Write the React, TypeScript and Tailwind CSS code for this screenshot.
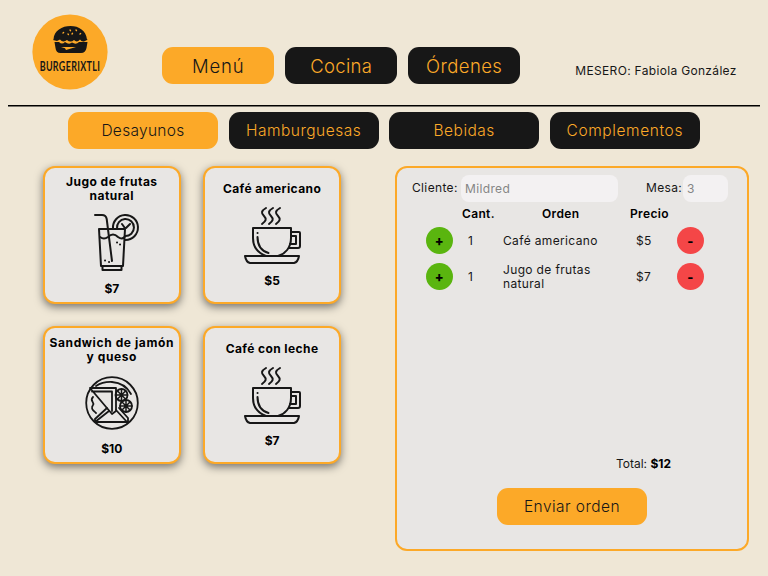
import React from "react";

const stroke = {
  fill: "none",
  stroke: "#171717",
  strokeWidth: 2,
  strokeLinecap: "round" as const,
  strokeLinejoin: "round" as const,
};

function Logo() {
  return (
    <svg className="block size-[76px] overflow-visible" viewBox="0 0 76 76">
      <circle cx="38" cy="38" r="37.6" fill="#fca928" />
      <path d="M21.500 25.500C22 16.500 30 12 38.500 12S54 16.500 55 25.500L56 25.500L53 27Q50 28.500 48 25.500Q45 29 42 26Q38.500 29 35 26Q31 29 28 25.500L25 27L21 26Z" fill="#171717" />
      <path d="M22.500 28L27 28Q30 31 33 28Q37 31 40 28.500Q44 31 47 28L55.500 28L54.500 34Q53.500 39 49 39H28.500Q24 39 23.500 34Z" fill="#171717" />
      <path d="M29 33H44L34 36L33 34.200Z" fill="#fca928" />
      <g stroke="#fca928" strokeWidth="1.4" strokeLinecap="round">
        <path d="M31 19l.6-.5M38 16l.5.7M40 20l.5-.7M44 16l.5.6M48 20l.6-.5M36 20l.4.4" />
      </g>
      <text x="12" y="57.500" textLength="94" lengthAdjust="spacing" transform="scale(0.64 1)" fill="#171717" fontFamily="Lato, sans-serif" fontSize="14" fontWeight="700">BURGERIXTLI</text>
    </svg>
  );
}

function Juice() {
  return (
    <svg className="block size-[58px]" viewBox="0 0 58 58" {...stroke}>
      <path d="M11 2h7q4 0 4.700 4L28 48" />
      <path d="M15 16h26l-2 37H17Z" />
      <path d="M18.500 53v4h19v-4" />
      <path d="M16 24q4 3 8 0 5-5 10 0 4 3 6.500 0" />
      <path d="M29 15.500A12.500 12.500 0 1 1 41.500 27" />
      <path d="M33 15.500A8.500 8.500 0 1 1 41 23" />
      <path d="m38 11 2.500 3.500M46 11l-4 4M33 29.500h.1M36 31.500h.1M21 47.500h.1M25 49h.1" />
    </svg>
  );
}

function Coffee() {
  return (
    <svg className="block h-[58px] w-[58px]" viewBox="0 0 58 58" {...stroke}>
      <path d="M23 2c-5 3-5 5-2 8s2 5-2 8M30 2c-5 3-5 5-2 8s2 5-2 8M37 2c-5 3-5 5-2 8s2 5-2 8" />
      <path d="M10 22h38v10c0 10-6 16-13 18H23C15 47 10 41 10 32Z" />
      <path d="M48 26h8q1 0 1 1v13q0 2-2 2h-9M48 30h5v8h-6" />
      <path d="M2 50h54q-1 6-5 7H7q-4-1-5-7Z" />
      <path d="M14.500 27h.1M14.500 31c0 9 4 14 11 16" />
    </svg>
  );
}

function Sandwich() {
  return (
    <svg className="block size-[54px]" viewBox="0 0 54 54" {...stroke} strokeWidth="1.8">
      <circle cx="27" cy="27" r="25.800" />
      <path d="M11 10Q18 5.500 27 6 40 7 46 18" />
      <path d="M5 12h26v23l-4 3ZM7 15.500h20V35" />
      <path d="M8 21c-4 4 2 5 0 8-3 4 1 6 3 8M22 32 10 43v3l14-11M10 46h32L31 34M34 32l9 10v4H10" />
      <circle cx="36.500" cy="19" r="6" />
      <circle cx="41" cy="30" r="6" />
      <path strokeWidth="1.500" d="M32.500 15l8 8M40.500 15l-8 8M36.500 13v12M31 19h11.500M37 26l8 8M45 26l-8 8M41 24v12M35 30h12" />
    </svg>
  );
}

const products = [
  { name: <>Jugo de frutas<br />natural</>, price: "$7", icon: <Juice />, top: "pt-[7px]", gap: "mt-[10px]", bottom: "mt-[11px]", icx: "ml-[3px]", ls: "tracking-[0.45px]" },
  { name: "Café americano", price: "$5", icon: <Coffee />, top: "pt-[14px]", gap: "mt-[10px]", bottom: "mt-[10px]", icx: "", ls: "tracking-[0.4px]" },
  { name: <>Sandwich de jamón<br />y queso</>, price: "$10", icon: <Sandwich />, top: "pt-[8px]", gap: "mt-[12px]", bottom: "mt-[12px]", icx: "", ls: "tracking-[0.6px]" },
  { name: "Café con leche", price: "$7", icon: <Coffee />, top: "pt-[14px]", gap: "mt-[10px]", bottom: "mt-[10px]", icx: "", ls: "tracking-[0.4px]" },
];

const orders = [
  { name: <>Café americano</>, price: "$5" },
  { name: <>Jugo de frutas<br />natural</>, price: "$7" },
];

const nav = [
  { label: "Menú", active: true, ls: "tracking-[0.8px]" },
  { label: "Cocina", active: false, ls: "tracking-[0.3px]" },
  { label: "Órdenes", active: false, ls: "tracking-[0.4px]" },
];

const categories = [
  { label: "Desayunos", active: true, ls: "tracking-[0.3px]" },
  { label: "Hamburguesas", active: false, ls: "tracking-[0.5px]" },
  { label: "Bebidas", active: false, ls: "tracking-[0.5px]" },
  { label: "Complementos", active: false, ls: "tracking-[0.6px]" },
];

export default function App() {
  return (
    <div className="h-[576px] w-[768px] overflow-hidden bg-[#efe7d6] font-[Inter,sans-serif] text-[12px] leading-[14px] text-[#171717]">
      <header className="mx-2 flex h-[105px]">
        <div className="ml-6 mt-[14px] w-[130px]"><Logo /></div>
        <nav className="mt-[47px] flex gap-[10.6px]">
          {nav.map((n) => (
            <button key={n.label} className={`h-[37.300px] w-[112.400px] rounded-[11px] pt-px text-[18.500px] font-light ${n.ls} ${n.active ? "bg-[#fca928]" : "bg-[#171717] text-[#fca928]"}`}>{n.label}</button>
          ))}
        </nav>
        <p className="ml-[55px] mt-[64px] tracking-[0.32px] whitespace-nowrap">MESERO: Fabiola González</p>
      </header>
      <div className="mx-2 h-[2px] border-b border-[#77736b] bg-black" />
      <nav className="ml-[68px] mt-[5px] flex gap-[10.600px]">
        {categories.map((c) => (
          <button key={c.label} className={`h-[37.300px] w-[150px] rounded-[11px] pt-px text-[15.500px] font-light ${c.ls} ${c.active ? "bg-[#fca928]" : "bg-[#171717] text-[#fca928]"}`}>{c.label}</button>
        ))}
      </nav>
      <main className="mt-[16.700px] flex">
        <section className="ml-[42.500px] grid h-[299px] w-[299px] shrink-0 grid-cols-[138.600px_138.600px] grid-rows-[138px_138px] gap-x-[21.700px] gap-y-[22.300px]">
          {products.map((p, i) => (
            <article key={i} className={`flex flex-col items-center rounded-[12px] border-2 border-[#fca928] bg-[#e8e6e4] text-center font-bold text-black shadow-[0_3px_8px_rgba(0,0,0,0.5)] ${p.top}`}>
              <h2 className={`whitespace-nowrap ${p.ls}`}>{p.name}</h2>
              <div className={`${p.gap} ${p.icx}`}>{p.icon}</div>
              <p className={p.bottom}>{p.price}</p>
            </article>
          ))}
        </section>
        <section className="ml-[53.500px] h-[385px] w-[354px] shrink-0 rounded-[12px] border-2 border-[#fca928] bg-[#e8e6e4] tracking-[0.35px]">
          <div className="mt-[7px] flex h-[27px] items-center">
            <label className="ml-[15px] w-[49px] whitespace-nowrap">Cliente:</label>
            <div className="h-[27px] w-[157px] rounded-[8px] bg-[#f3f1f2] pl-1 leading-[27px] text-[#858585]">Mildred</div>
            <label className="ml-[28px] w-[37px] whitespace-nowrap">Mesa:</label>
            <div className="h-[27px] w-[45px] rounded-[8px] bg-[#f3f1f2] pl-1 leading-[27px] text-[#858585]">3</div>
          </div>
          <div className="mt-[5px] flex font-semibold text-black">
            <span className="ml-[65px] w-[80px]">Cant.</span>
            <span className="w-[88px]">Orden</span>
            <span>Precio</span>
          </div>
          <div className="mt-[2px]">
            {orders.map((o, i) => (
              <div key={i} className="flex h-9 items-center">
                <button className="ml-[29px] size-[27px] rounded-full bg-[#5ab50f] text-[13px] font-extrabold text-black">+</button>
                <span className="ml-[15px] w-[35px]">1</span>
                <span className="w-[133px]">{o.name}</span>
                <span className="w-[41px]">{o.price}</span>
                <button className="size-[27px] rounded-full bg-[#f44647] text-[13px] font-extrabold text-black">-</button>
              </div>
            ))}
          </div>
          <p className="mr-[76px] mt-[162px] text-right tracking-normal">Total: <b className="text-black">$12</b></p>
          <button className="mt-[17px] ml-[100px] h-[37.300px] w-[150px] rounded-[11px] bg-[#fca928] pt-px text-[15.500px] font-light tracking-[0.45px]">Enviar orden</button>
        </section>
      </main>
    </div>
  );
}
